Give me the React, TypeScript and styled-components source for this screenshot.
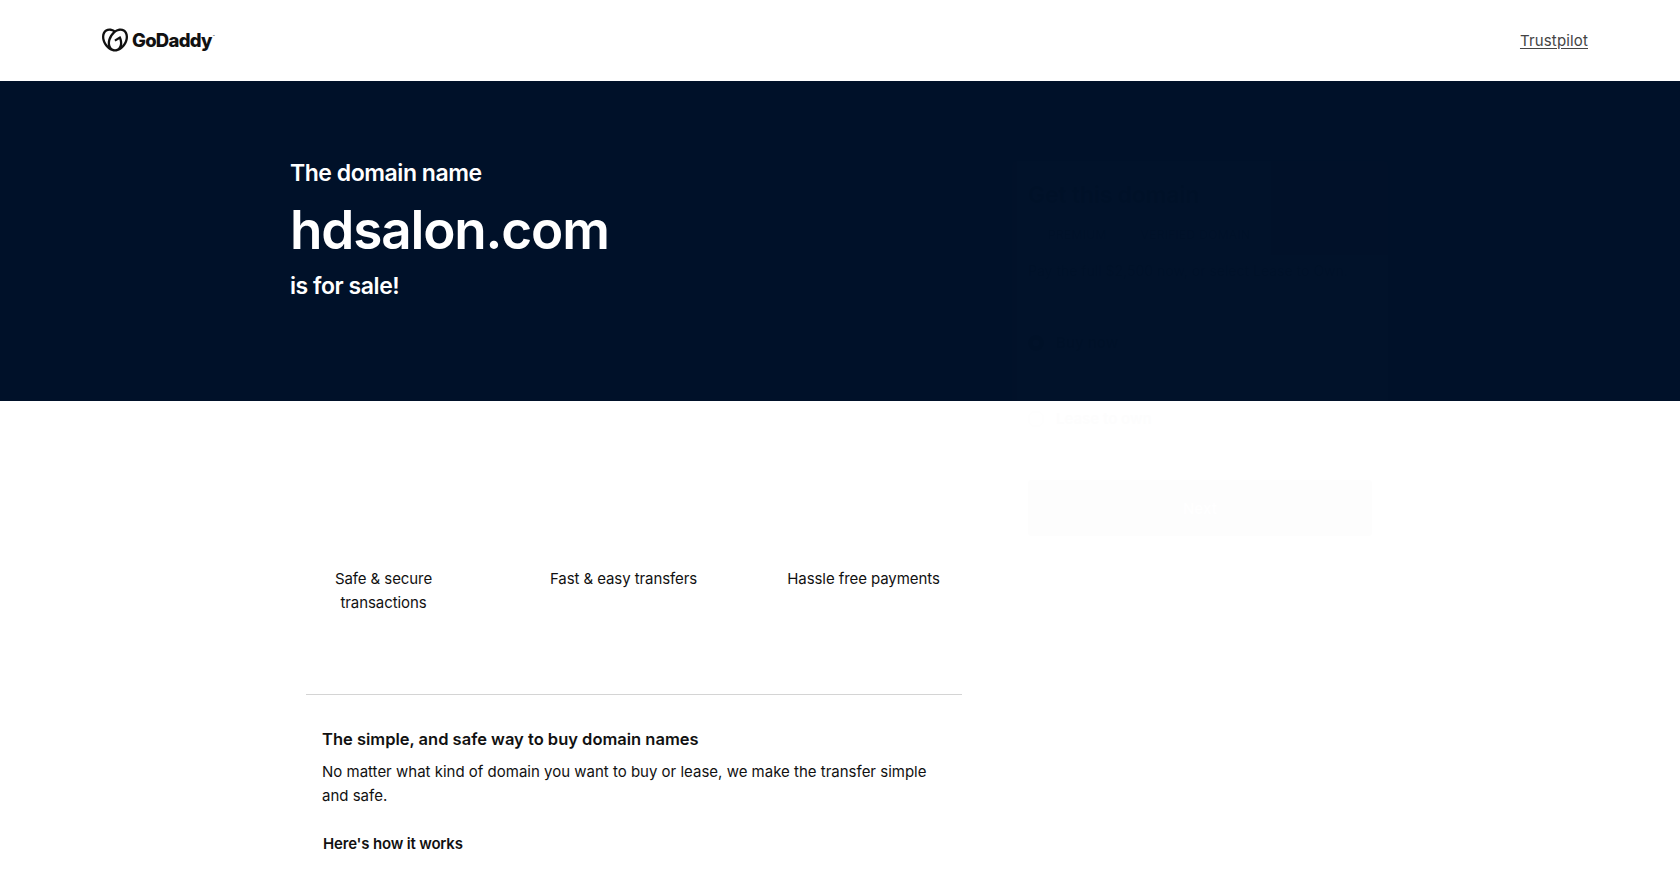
import styled, { createGlobalStyle } from 'styled-components';
import { SiGodaddy } from 'react-icons/si';

const GlobalStyle = createGlobalStyle`
    * {
        box-sizing: border-box;
    }
    body {
        margin: 0;
        background: #fff;
        color: #111;
        font-family: Inter, 'Liberation Sans', sans-serif;
        font-size: 15px;
        line-height: 24px;
        overflow: hidden;
    }
    h1, h2, h3, p {
        margin: 0;
    }
`;

const Header = styled.header`
    display: flex;
    align-items: center;
    justify-content: space-between;
    height: 81px;
    padding: 0 92px 0 102px;
`;

const Logo = styled.div`
    display: flex;
    align-items: center;
    gap: 4px;
    padding-bottom: 1px;
    color: #111;
`;

const LogoText = styled.span`
    font-size: 18.5px;
    font-weight: 800;
    letter-spacing: -0.75px;
`;

const Trademark = styled.sup`
    margin-left: 1px;
    font-size: 3px;
    line-height: 0;
    vertical-align: 9px;
`;

const TrustLink = styled.a`
    color: #444;
    letter-spacing: 0.15px;
    text-decoration: underline;
    text-underline-offset: 2px;
`;

const Hero = styled.section`
    height: 320px;
    background: #001129;
`;

const Container = styled.div`
    display: grid;
    grid-template-columns: 722px 376px;
    margin-left: 290px;
`;

const HeroText = styled.div`
    padding-top: 76px;
    color: #fff;
`;

const HeroLine = styled.h2`
    font-size: 23px;
    font-weight: 600;
    line-height: 32px;
    letter-spacing: -0.45px;
`;

const DomainName = styled.h1`
    margin: 9px 0 8px;
    font-size: 53px;
    font-weight: 600;
    line-height: 64px;
    letter-spacing: -1.15px;
`;

// Offer card, still at the start of its fade-in
const OfferCard = styled.aside`
    height: 420px;
    margin: 80px 0 -180px;
    padding: 16px;
    position: relative;
    border-radius: 4px;
    background: #fff;
    opacity: 0.005;
`;

const OfferTitle = styled.h2`
    font-size: 23px;
    line-height: 36px;
    letter-spacing: -0.3px;
`;

const Tags = styled.div`
    display: flex;
    gap: 34px;
    padding: 8px 20px;
    margin-top: 2px;
    font-size: 12px;
    letter-spacing: 0.3px;
`;

const OfferNote = styled.p`
    margin-top: 4px;
    font-size: 14px;
    white-space: nowrap;
`;

const Option = styled.label<{ $top: number }>`
    display: flex;
    align-items: center;
    gap: 12px;
    margin-top: ${(p) => p.$top}px;
    font-weight: 600;
`;

const Radio = styled.span<{ $checked?: boolean }>`
    width: 16px;
    height: 16px;
    border-radius: 50%;
    border: ${(p) => (p.$checked ? '5px solid #111' : '1px solid #999')};
`;

const NextButton = styled.button`
    width: 100%;
    height: 56px;
    margin-top: 49px;
    border: 0;
    border-radius: 4px;
    background: #111;
    color: #fff;
    font: 600 15px Inter, sans-serif;
`;

const Content = styled.main`
    width: 656px;
    margin-left: 306px;
    padding-top: 166px;
`;

const Benefits = styled.div`
    display: grid;
    grid-template-columns: repeat(3, 155px);
    gap: 85px;
    height: 127px;
    text-align: center;
    letter-spacing: -0.08px;
`;

const About = styled.section`
    padding: 32px 16px 0;
    border-top: 1px solid #d4d4d4;
`;

const AboutTitle = styled.h2`
    margin-bottom: 9px;
    font-size: 16.5px;
    font-weight: 600;
    line-height: 24px;
`;

const Steps = styled.h3`
    margin: 24px 0 0 1px;
    font-size: 15px;
    font-weight: 600;
    letter-spacing: -0.17px;
`;

const benefits = ['Safe & secure transactions', 'Fast & easy transfers', 'Hassle free payments'];

const App = () => {
    return (
        <>
            <GlobalStyle />
            <Header>
                <Logo>
                    <SiGodaddy size={26} />
                    <LogoText>
                        GoDaddy<Trademark>™</Trademark>
                    </LogoText>
                </Logo>
                <TrustLink>Trustpilot</TrustLink>
            </Header>
            <Hero>
                <Container>
                    <HeroText>
                        <HeroLine>The domain name</HeroLine>
                        <DomainName>hdsalon.com</DomainName>
                        <HeroLine>is for sale!</HeroLine>
                    </HeroText>
                    <OfferCard>
                        <OfferTitle>Get this domain</OfferTitle>
                        <Tags>
                            <span>PREMIUM</span>
                            <span>VERIFIED DOMAIN</span>
                        </Tags>
                        <OfferNote>Pay the full $2,500 now, or select Lease to Own.</OfferNote>
                        <Option $top={48}>
                            <Radio $checked />
                            Buy now
                        </Option>
                        <Option $top={52}>
                            <Radio />
                            Lease to own
                        </Option>
                        <NextButton>Next</NextButton>
                    </OfferCard>
                </Container>
            </Hero>
            <Content>
                <Benefits>
                    {benefits.map((text) => (
                        <p key={text}>{text}</p>
                    ))}
                </Benefits>
                <About>
                    <AboutTitle>The simple, and safe way to buy domain names</AboutTitle>
                    <p>No matter what kind of domain you want to buy or lease, we make the transfer simple and safe.</p>
                    <Steps>Here's how it works</Steps>
                </About>
            </Content>
        </>
    );
};

export default App;
